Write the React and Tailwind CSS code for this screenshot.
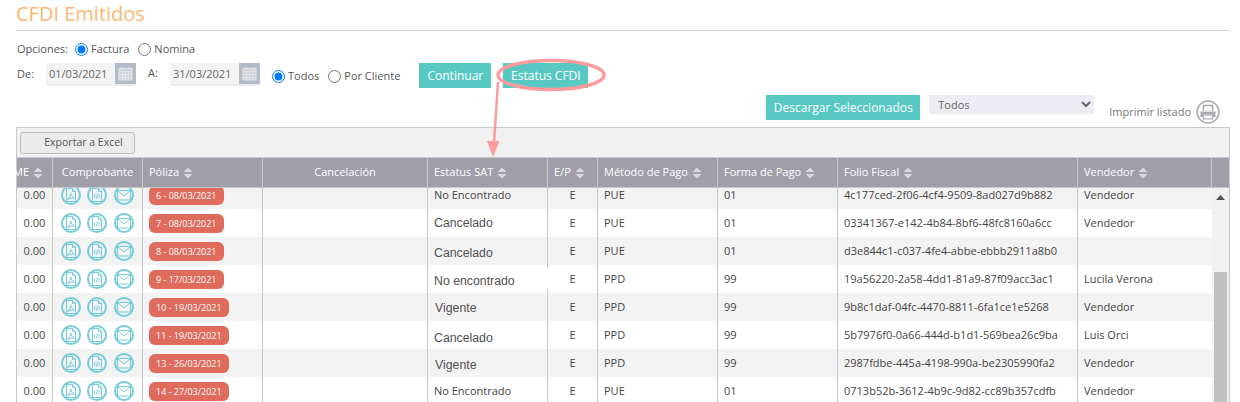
const rows = [
  { num: '6 - 08/03/2021', status: 'No Encontrado', ep: 'PUE', forma: '01', folio: '4c177ced-2f06-4cf4-9509-8ad027d9b882', vendedor: 'Vendedor' },
  { num: '7 - 08/03/2021', status: 'Cancelado', pasted: 'pl-[6px] pt-0', ep: 'PUE', forma: '01', folio: '03341367-e142-4b84-8bf6-48fc8160a6cc', vendedor: 'Vendedor' },
  { num: '8 - 08/03/2021', status: 'Cancelado', pasted: 'pl-[6px] pt-[4px]', ep: 'PUE', forma: '01', folio: 'd3e844c1-c037-4fe4-abbe-ebbb2911a8b0', vendedor: '' },
  { num: '9 - 17/03/2021', status: 'No encontrado', pasted: 'pl-[6px] pt-[4px]', patch: true, ep: 'PPD', forma: '99', folio: '19a56220-2a58-4dd1-81a9-87f09acc3ac1', vendedor: 'Lucila Verona' },
  { num: '10 - 19/03/2021', status: 'Vigente', pasted: 'pl-[7px] pt-[2px]', ep: 'PPD', forma: '99', folio: '9b8c1daf-04fc-4470-8811-6fa1ce1e5268', vendedor: 'Vendedor' },
  { num: '11 - 19/03/2021', status: 'Cancelado', pasted: 'pl-[6px] pt-[6px]', ep: 'PPD', forma: '99', folio: '5b7976f0-0a66-444d-b1d1-569bea26c9ba', vendedor: 'Luis Orci' },
  { num: '13 - 26/03/2021', status: 'Vigente', pasted: 'pl-[7px] pt-[4px]', ep: 'PPD', forma: '99', folio: '2987fdbe-445a-4198-990a-be2305990fa2', vendedor: 'Vendedor' },
  { num: '14 - 27/03/2021', status: 'No Encontrado', ep: 'PUE', forma: '01', folio: '0713b52b-3612-4b9c-9d82-cc89b357cdfb', vendedor: 'Vendedor' },
];

const gridCols = 'grid grid-cols-[36px_90px_120px_165px_120px_50px_120px_120px_240px_134px]';
const cell = 'border-r border-[#c8c8c8] flex items-center';

const SortIcon = () => (
  <svg width="10" height="12" viewBox="0 0 10 12" className="ml-[4px] shrink-0">
    <path d="M5 0.5 9.5 5H0.5Z M0.5 7H9.5L5 11.5Z" fill="#d9d8dd" />
  </svg>
);

// Circled teal icons in the Comprobante column
const CircleIcon = ({ children, className }) => (
  <svg width="20" height="20" viewBox="0 0 20 20" fill="none" stroke="#72ccd9" strokeWidth="1" className={`shrink-0 ${className || ''}`}>
    <circle cx="10" cy="10" r="9" strokeWidth="2" />
    {children}
  </svg>
);

const PdfIcon = () => (
  <CircleIcon>
    <path d="M5.500 3.500h6l3 3v10h-9z" />
    <path d="M11.500 3.500v3h3" />
    <path d="M6.500 14.500c2-1.500 3-4 3-6.500 1 3 2.500 4.500 4 5-2-.2-5 .3-7 1.500z" />
  </CircleIcon>
);

const XmlIcon = () => (
  <CircleIcon>
    <path d="M5.500 3.500h6l3 3v10h-9z" />
    <path d="M11.500 3.500v3h3" />
    <path d="M8.500 9 7 11l1.500 2M11.500 9 13 11l-1.500 2M10.600 8.500 9.400 13.500" />
  </CircleIcon>
);

const MailIcon = () => (
  <CircleIcon className="ml-px">
    <rect x="3.500" y="5.500" width="13" height="9.500" />
    <path d="M3.500 5.500 10 11l6.500-5.500" />
  </CircleIcon>
);

const CalendarIcon = () => (
  <span className="w-[21px] h-[21px] bg-[#b3bac8] flex items-center justify-center shrink-0">
    <svg width="15" height="15" viewBox="0 0 15 15" fill="none" stroke="#e3e5ea" strokeWidth="1">
      <rect x="1" y="2.500" width="13" height="11.500" fill="#cdd1da" />
      <path d="M1 5.500h13M1 8.500h13M1 11.500h13M4.500 5.500v8.500M7.500 5.500v8.500M10.500 5.500v8.500" />
      <path d="M4 1v2M11 1v2" />
    </svg>
  </span>
);

const DateBox = ({ value }) => (
  <div className="w-[90px] h-[23px] bg-[#f3f3f3] border-b-2 border-[#ececec] rounded-b-[3px] flex items-start justify-between">
    <span className="pl-[3px] leading-[21px] text-[11px] text-[#666]">{value}</span>
    <CalendarIcon />
  </div>
);

const Radio = ({ checked, label, className }) => (
  <label className={`inline-flex items-center ${className || ''}`}>
    <input type="radio" checked={!!checked} readOnly className="w-[13px] h-[13px] m-0" />
    <span className="ml-[3px]">{label}</span>
  </label>
);

const PrinterIcon = () => (
  <svg width="24" height="24" viewBox="0 0 24 24" fill="none" className="shrink-0">
    <circle cx="12" cy="12" r="11" stroke="#a9a9ae" strokeWidth="1.500" />
    <path d="M7.500 11V5.500h9V11" stroke="#a9a9ae" strokeWidth="1.500" />
    <path d="M4.500 11.500h15V17h-2.500v-2.500H7V17H4.500z" fill="#a9a9ae" />
    <path d="M7.500 15h9v4h-9z" stroke="#a9a9ae" strokeWidth="1.200" />
  </svg>
);

const HeaderCell = ({ label, sort = true, center }) => (
  <div className={`${cell} ${center ? 'justify-center' : 'pl-[6px]'}`}>
    <span>{label}</span>
    {sort && <SortIcon />}
  </div>
);

const Row = ({ row, index }) => {
  const bg = index % 2 === 0 ? 'bg-[#f3f3f3]' : 'bg-white';
  return (
    <div className={`${gridCols} h-[28px] ${bg}`}>
      <div className={`${cell} justify-center`}>0.00</div>
      <div className={`${cell} pl-[8px] gap-[6px]`}>
        <PdfIcon />
        <XmlIcon />
        <MailIcon />
      </div>
      <div className={`${cell} pl-[6px]`}>
        <span className="h-[19px] px-[7px] rounded-[6px] bg-[#de6b5c] text-white leading-[19px] text-[9px] whitespace-nowrap">
          {row.num}
        </span>
      </div>
      <div className={cell} />
      {row.pasted ? (
        <div className={`${cell} relative ${row.pasted} font-['Liberation_Sans',sans-serif] text-[12.300px] text-[#505050]`}>
          {row.status}
          {row.patch && <span className="absolute right-[-1px] top-[3px] w-[2px] h-[21px] bg-white" />}
        </div>
      ) : (
        <div className={`${cell} pl-[6px]`}>{row.status}</div>
      )}
      <div className={`${cell} justify-center`}>E</div>
      <div className={`${cell} pl-[6px]`}>{row.ep}</div>
      <div className={`${cell} pl-[6px]`}>{row.forma}</div>
      <div className={`${cell} pl-[6px]`}>{row.folio}</div>
      <div className={`${cell} pl-[6px] border-r-0`}>{row.vendedor}</div>
    </div>
  );
};

export default function App() {
  return (
    <div className="relative h-[402px] overflow-hidden bg-white pl-4 pr-[10px] font-['Open_Sans',sans-serif] text-[11px] text-[#555]">
      <h1 className="h-[31px] border-b border-[#cfcfcf] text-[20px] leading-[27px] text-[#fdb66f]">CFDI Emitidos</h1>

      <div className="h-[19px] mt-[9px] flex items-center pl-px">
        <span className="mr-[7px]">Opciones:</span>
        <Radio checked label="Factura" />
        <Radio label="Nomina" className="ml-[9px]" />
      </div>

      <div className="mt-[4px] h-[25px] flex items-start">
        <span className="w-[30px] pl-px leading-[22px]">De:</span>
        <DateBox value="01/03/2021" />
        <span className="w-[34px] pl-3 leading-[20px]">A:</span>
        <DateBox value="31/03/2021" />
        <Radio checked label="Todos" className="ml-[12px] h-[25px] pt-[2px]" />
        <Radio label="Por Cliente" className="ml-[9px] h-[25px] pt-[2px]" />
        <button className="ml-[19px] w-[72px] h-[25px] bg-[#58c8c3] text-white text-[12px]">Continuar</button>
        <button className="ml-[12px] w-[85px] h-[25px] bg-[#58c8c3] text-white text-[12px]">Estatus CFDI</button>
      </div>

      <div className="mt-[7px] h-[32px] flex items-start justify-end pr-[10px]">
        <button className="w-[154px] h-[25px] bg-[#58c8c3] text-white text-[12px]">Descargar Seleccionados</button>
        <select defaultValue="Todos" className="ml-[9px] w-[165px] h-[19px] bg-[#edecf2] pl-[5px] text-[11px] text-[#666]">
          <option>Todos</option>
        </select>
        <span className="ml-[15px] mt-[9px] leading-[15px] text-[#777]">Imprimir listado</span>
        <span className="ml-[5px] mt-[5px]"><PrinterIcon /></span>
      </div>

      <div className="border-x border-t border-[#c8c8c8]">
        <div className="h-[29px] bg-[#f1f1f1] pl-[3px] pt-[4px]">
          <button className="w-[115px] h-[22px] rounded-[3px] border border-[#bdbdbd] bg-[#ebebeb] pl-[12px] text-[10.500px] text-[#555]">
            Exportar a Excel
          </button>
        </div>

        <div className="flex h-[31px] bg-[#a09ea8] border-y border-[#c8c8c8] text-white">
          <div className={`${gridCols} h-full`}>
            <div className={`${cell} justify-end pr-[9px]`}>
              <span>ME</span>
              <SortIcon />
            </div>
            <HeaderCell label="Comprobante" sort={false} center />
            <HeaderCell label="Póliza" />
            <HeaderCell label="Cancelación" sort={false} center />
            <HeaderCell label="Estatus SAT" />
            <HeaderCell label="E/P" />
            <HeaderCell label="Método de Pago" />
            <HeaderCell label="Forma de Pago" />
            <HeaderCell label="Folio Fiscal" />
            <HeaderCell label="Vendedor" />
          </div>
          <div className="w-[17px]" />
        </div>

        <div className="flex h-[215px] overflow-hidden text-[#444]">
          <div className="w-[1195px] -mt-[7px]">
            {rows.map((row, i) => (
              <Row key={row.num} row={row} index={i} />
            ))}
          </div>
          <div className="w-[17px] bg-[#f1f1f1] flex flex-col items-center">
            <svg width="9" height="5" viewBox="0 0 9 5" className="mt-[7px]">
              <path d="M4.500 0 9 5H0Z" fill="#505050" />
            </svg>
            <div className="mt-[72px] w-[13px] flex-1 bg-[#c1c1c1]" />
          </div>
        </div>
      </div>

      {/* Pink annotation drawn over the page */}
      <svg width="1240" height="402" viewBox="0 0 1240 402" fill="none" className="absolute left-0 top-0 pointer-events-none">
        <ellipse cx="551" cy="75" rx="53" ry="14.500" stroke="#ff9b9c" strokeWidth="3.500" />
        <path d="M498 82 494 143" stroke="#ff9b9c" strokeWidth="2.500" />
        <path d="M493 157 487 141H499.500Z" fill="#ff9b9c" />
      </svg>
    </div>
  );
}
